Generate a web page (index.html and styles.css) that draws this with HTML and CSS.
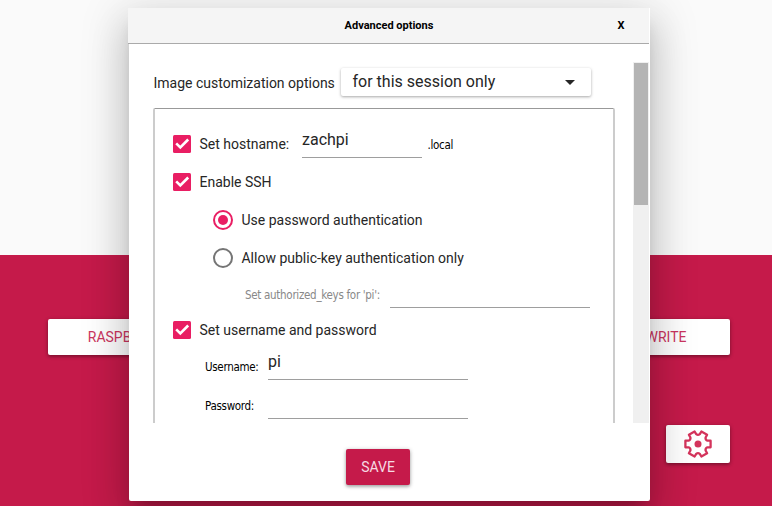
FILE: index.html
```html
<!DOCTYPE html>
<html lang="en">
<head>
<meta charset="utf-8">
<title>Advanced options</title>
<link rel="stylesheet" href="styles.css">
</head>
<body>
<main class="app">
  <div class="app-top"></div>
  <div class="app-bottom">
    <div class="main-buttons">
      <button class="raised os">RASPBERRY PI OS</button>
      <button class="raised write">WRITE</button>
    </div>
    <button class="raised gear" aria-label="Settings">
      <svg width="30" height="30" viewBox="-15 -15 30 30">
        <path class="cog" d="M12.6-3.3V3.3L9.4 3.3Q7.2 4.2 7.6 6.5L9.1 9.3L3.4 12.5L1.8 9.8Q0 8.4-1.8 9.8L-3.4 12.5L-9.1 9.3L-7.6 6.5Q-7.2 4.2-9.4 3.3L-12.6 3.3V-3.3L-9.4-3.3Q-7.2-4.2-7.6-6.5L-9.1-9.3L-3.4-12.5L-1.8-9.8Q0-8.4 1.8-9.8L3.4-12.5L9.1-9.3L7.6-6.5Q7.2-4.2 9.4-3.3Z"/>
        <circle class="hub" r="3.5"/>
      </svg>
    </button>
  </div>
</main>

<section class="dialog">
  <header class="titlebar">
    <span class="title">Advanced options</span>
    <span class="close">X</span>
  </header>
  <div class="scroll">
    <div class="content">
      <div class="scope">
        <span class="scope-label">Image customization options</span>
        <div class="combo"><span class="combo-text">for this session only</span><svg width="10" height="5" viewBox="0 0 10 5"><path d="M0 0h10L5 5z"/></svg></div>
      </div>
      <div class="group">
        <div class="row host">
          <svg class="check" viewBox="0 0 18 18"><rect width="18" height="18" rx="1.5"/><path d="M3.2 8.4L7.3 12.5L15.2 4.5"/></svg>
          <span class="label host-label">Set hostname:</span>
          <span class="field host-field">zachpi</span>
          <span class="small local">.local</span>
        </div>
        <div class="row">
          <svg class="check" viewBox="0 0 18 18"><rect width="18" height="18" rx="1.5"/><path d="M3.2 8.4L7.3 12.5L15.2 4.5"/></svg>
          <span class="label">Enable SSH</span>
        </div>
        <div class="row radio-row">
          <svg class="radio on" viewBox="0 0 20 20"><circle class="ring" cx="10" cy="10" r="9"/><circle class="dot" cx="10" cy="10" r="5"/></svg>
          <span class="label">Use password authentication</span>
        </div>
        <div class="row radio-row">
          <svg class="radio" viewBox="0 0 20 20"><circle class="ring" cx="10" cy="10" r="9"/></svg>
          <span class="label">Allow public-key authentication only</span>
        </div>
        <div class="row keys">
          <span class="small keys-label">Set authorized_keys for 'pi':</span>
          <span class="field keys-field"></span>
        </div>
        <div class="row user-row">
          <svg class="check" viewBox="0 0 18 18"><rect width="18" height="18" rx="1.5"/><path d="M3.2 8.4L7.3 12.5L15.2 4.5"/></svg>
          <span class="label">Set username and password</span>
        </div>
        <div class="row cred">
          <span class="small cred-label">Username:</span>
          <span class="field cred-field">pi</span>
        </div>
        <div class="row cred">
          <span class="small cred-label">Password:</span>
          <span class="field cred-field"></span>
        </div>
      </div>
    </div>
    <div class="scrollbar"><div class="thumb"></div></div>
  </div>
  <footer class="actions"><button class="raised save">SAVE</button></footer>
</section>
</body>
</html>
```
FILE: styles.css
```css
* { box-sizing: border-box; }
body { margin: 0; width: 772px; height: 506px; overflow: hidden; font-family: Roboto, sans-serif; color: #262626; position: relative; }
.app { display: flex; flex-direction: column; height: 506px; }
.app-top { height: 255px; background: #fafafa; }
.app-bottom { flex: 1; background: #c51a4a; padding: 64px 42px 0 48px; display: flex; flex-direction: column; align-items: flex-end; }
.main-buttons { display: flex; justify-content: space-between; width: 100%; }
.raised { border: 0; border-radius: 2px; padding: 0; height: 36px; background: #fff; color: #c51a4a; font: 14px Roboto, sans-serif; box-shadow: 0 1px 4px rgba(0,0,0,.3), 0 2px 3px rgba(0,0,0,.15); }
.os { width: 190px; padding-left: 4px; }
.write { width: 128px; }
.main-buttons .raised { color: #cc3560; }
.gear { width: 64px; height: 38px; margin-top: 70px; display: flex; align-items: center; justify-content: center; }
.cog { fill: none; stroke: #d4345c; stroke-width: 2.3; stroke-linejoin: round; }
.hub { fill: #d4345c; }

.dialog { position: absolute; left: 129px; top: 8px; width: 521px; height: 493px; background: #fff; border-radius: 0 0 2px 2px; display: flex; flex-direction: column; box-shadow: 0 11px 15px -7px rgba(0,0,0,.2), 0 24px 38px 3px rgba(0,0,0,.14), 0 9px 46px 8px rgba(0,0,0,.12); }
.titlebar { height: 36px; margin: 0 1px 0 -1px; background: #f5f5f5; border-bottom: 1px solid #aaa; display: grid; grid-template-columns: 56px 1fr 56px; align-items: center; text-align: center; color: #000; font-size: 11px; font-weight: 700; line-height: 33px; }
.title { grid-column: 2; padding-left: 1px; }
.scroll { display: flex; height: 361px; margin-top: 18px; overflow: hidden; justify-content: space-between; }
.content { width: 462px; margin-left: 24px; }
.scope { display: flex; align-items: center; height: 40px; font-size: 14px; }
.scope-label { width: 188px; padding: 1px 0 0 .5px; white-space: nowrap; }
.combo { width: 250px; height: 28px; border-radius: 2px; box-shadow: 0 1px 3px rgba(0,0,0,.35); background: #fff; display: flex; align-items: center; justify-content: space-between; padding: 0 16px 0 12px; font-size: 16px; }
.combo-text { line-height: 18px; margin-left: -.5px; }
.combo path { fill: #262626; }
.group { margin-top: 6px; height: 400px; border: 2px solid #ccc; border-top: 1px solid #999; border-radius: 2px; padding: 16px 0 0 18.4px; }
.row { display: flex; align-items: center; height: 38px; font-size: 14px; white-space: nowrap; }
.check { width: 18px; height: 18px; margin-right: 8.1px; flex: none; }
.check rect { fill: #e91e63; }
.check path { fill: none; stroke: #fff; stroke-width: 2.6; }
.host-label { width: 102.5px; }
.field { border-bottom: 1px solid #9e9e9e; font-size: 16px; line-height: 19px; }
.host-field { width: 120px; height: 29px; padding-top: 1px; margin-top: -2px; }
.small { font-family: "DejaVu Sans Condensed", "DejaVu Sans", sans-serif; font-stretch: condensed; font-size: 11.5px; color: #000; letter-spacing: -.3px; }
.local { margin-left: 5.5px; padding-top: 1px; }
.radio-row { padding-left: 40px; }
.radio { width: 20px; height: 20px; margin-right: 8.1px; }
.ring { fill: none; stroke: #757575; stroke-width: 2; }
.on .ring { stroke: #e91e63; }
.dot { fill: #e91e63; }
.keys { height: 34px; padding-left: 71.6px; }
.keys-label { width: 145px; color: #888; padding-top: 1px; }
.keys-field { width: 200px; height: 28px; }
.cred { height: 39px; padding-left: 31.6px; align-items: flex-start; }
.cred-label { width: 63px; line-height: 14px; padding-top: 11px; }
.cred-field { width: 200px; height: 28px; margin-top: 3px; }
.scrollbar { width: 16px; margin-right: 1px; background: #f0f0f0; padding: 1px 1px 0; }
.thumb { height: 142px; background: #b4b4b4; }
.actions { display: flex; padding: 26px 0 0 217px; }
.save { width: 64px; background: #c51a4a; color: #f6dbe3; }
```
